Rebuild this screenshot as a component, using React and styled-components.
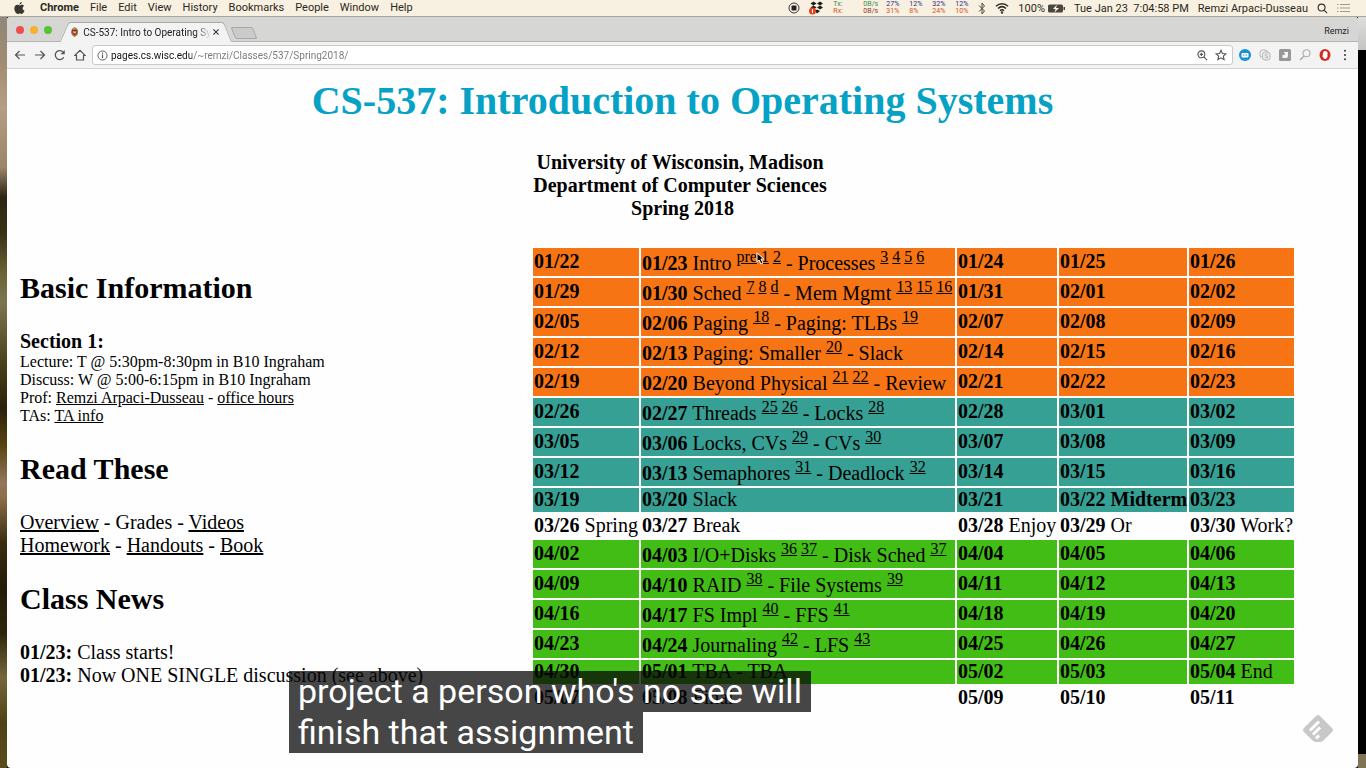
import React from "react";
import styled, { createGlobalStyle, css } from "styled-components";

const GlobalStyle = createGlobalStyle`
  * { box-sizing: border-box; }
  body { margin: 0; background: #000; }
  button { border: 0; padding: 0; margin: 0; background: none; font: inherit; color: inherit; }
`;

const uiFont = css`
  font-family: Roboto, "Liberation Sans", sans-serif;
  font-size: ${(p) => (p.$small ? 10 : 11)}px;
`;

const Desktop = styled.div`
  position: relative;
  display: flex;
  flex-direction: column;
  min-height: 100vh;
`;

/* ---------- macOS menu bar ---------- */

const MenuBar = styled.header`
  ${uiFont}
  display: flex;
  align-items: center;
  justify-content: space-between;
  height: 17px;
  padding: 0 16px 0 14px;
  background: #f8f0e0;
  border-bottom: 1px solid #a9a49a;
  color: #2b2822;
  white-space: nowrap;
`;

const MenuGroup = styled.nav`
  display: flex;
  align-items: center;
  gap: 11px;
`;

const MenuItem = styled.button`
  font-weight: ${(p) => (p.$strong ? 700 : 400)};
  line-height: 16px;
`;

const AppleSlot = styled.span`
  display: flex;
  margin-right: 4px;
`;

const StatusGroup = styled.div`
  display: flex;
  align-items: center;
  gap: 9px;
`;

const Meter = styled.div`
  width: ${(p) => p.$width}px;
  font-size: 7px;
  line-height: 7px;
  color: ${(p) => p.$top};
`;

const MeterLow = styled.div`
  color: ${(p) => p.$color || "#d0502c"};
`;

const Meters = styled.div`
  display: flex;
  gap: 9px;
`;

const Battery = styled.div`
  display: flex;
  align-items: center;
  gap: 3px;
`;

/* ---------- browser window ---------- */

const Stage = styled.div`
  flex: 1;
  display: grid;
  grid-template-columns: 7px minmax(0, 1fr) 8px;
`;

const WallpaperLeft = styled.div`
  background: linear-gradient(
    #8f8878 0%, #a08c70 6%, #b59e84 12%, #9c8468 20%, #2c2413 24%, #3a3214 29%,
    #6a6234 34%, #7c7650 38%, #4a401c 46%, #2a210c 52%, #57430f 57%, #92765a 62%,
    #8c6e48 64%, #3a2d0e 70%, #241c08 76%, #2e260c 82%, #75663c 88%, #4e4214 94%, #5c4c1c 100%
  );
`;

const WallpaperRight = styled.div`
  background: linear-gradient(
    #dededc 0, #c4c4c2 33px, #000 33px, #000 calc(100% - 14px), #7f7555 calc(100% - 14px)
  );
`;

const Window = styled.div`
  display: flex;
  flex-direction: column;
  background: #fefefe;
  border-radius: 3px 3px 4px 4px;
  overflow: hidden;
`;

const TabStrip = styled.div`
  ${uiFont}
  display: flex;
  align-items: flex-end;
  height: 25px;
  padding-right: 9px;
  background: #d6d6d4;
  border-bottom: 1px solid #b4b4b4;
  color: #222;
`;

const Lights = styled.div`
  display: flex;
  gap: 6px;
  padding: 0 12px 7px 9px;
`;

const Light = styled.button`
  width: 8px;
  height: 8px;
  border-radius: 50%;
  background: ${(p) => p.$color};
`;

const Tab = styled.div`
  position: relative;
  z-index: 0;
  display: flex;
  align-items: center;
  gap: 5px;
  width: 164px;
  height: 20px;
  margin: 0 5px -1px 0;
  padding-left: 7px;

  &::before,
  &::after {
    content: "";
    position: absolute;
    z-index: -1;
    top: 0;
    bottom: 0;
    background: #f3f3f3;
    border-top: 1px solid #a8a8a8;
  }
  &::before {
    left: 0;
    width: 60%;
    border-left: 1px solid #a8a8a8;
    border-radius: 3px 0 0 0;
    transform: skewX(-24deg);
  }
  &::after {
    right: 0;
    width: 60%;
    border-right: 1px solid #a8a8a8;
    border-radius: 0 3px 0 0;
    transform: skewX(22deg);
  }
`;

const TabTitle = styled.span`
  flex: 1;
  margin-right: -3px;
  font-size: 10px;
  white-space: nowrap;
  mask-image: linear-gradient(90deg, #000 88%, transparent 100%);
`;

const TabClose = styled.button`
  display: flex;
  margin-right: 9px;
`;

const NewTab = styled.button`
  width: 22px;
  height: 12px;
  margin-bottom: 2px;
  border: 1px solid #a8a8a8;
  border-radius: 2px;
  background: #cbcbc9;
  transform: skewX(22deg);
`;

const Profile = styled.span`
  margin-left: auto;
  padding-bottom: 5px;
  font-size: 9px;
`;

const Toolbar = styled.div`
  display: flex;
  align-items: center;
  gap: 8px;
  height: 27px;
  padding: 0 7px;
  background: #f3f3f3;
  border-bottom: 1px solid #d4d4d4;
`;

const ToolButton = styled.button`
  display: flex;
  align-items: center;
  justify-content: center;
  flex: none;
  width: 12px;
  height: 16px;
`;

const AddressBar = styled.label`
  flex: 1;
  display: flex;
  align-items: center;
  gap: 3px;
  height: 20px;
  margin: 0 -2px;
  padding: 0 5px 0 4px;
  border: 1px solid #cacaca;
  border-radius: 3px;
  background: #fff;
`;

const AddressActions = styled.span`
  display: flex;
  gap: 7px;
`;

const AddressInput = styled.input`
  ${uiFont}
  flex: 1;
  min-width: 0;
  border: 0;
  padding: 0;
  outline: 0;
  color: #333;
  background: linear-gradient(90deg, #111 81px, #777 81px) text;
  -webkit-text-fill-color: transparent;
`;

/* ---------- course page ---------- */

const Page = styled.main`
  position: relative;
  flex: 1;
  padding: 9px 64px 54px 13px;
  font-family: "Liberation Serif", "Times New Roman", serif;
  font-size: 20px;
  line-height: 23px;
  color: #000;
`;

const Masthead = styled.div`
  margin-right: -51px;
  text-align: center;
`;

const Title = styled.h1`
  margin: 0 0 27px;
  font-size: 40px;
  line-height: 46px;
  color: #06a2c5;
`;

const School = styled.p`
  margin: 0 0 26px;
  font-weight: 700;
`;

const Columns = styled.div`
  display: flex;
  align-items: center;
  justify-content: space-between;
`;

const Sidebar = styled.div`
  white-space: nowrap;
  flex: 1;
  min-width: 0;
`;

const Heading = styled.h2`
  margin: ${(p) => (p.$first ? "0 0 24px" : "25px 0")};
  font-size: 30px;
  line-height: 34px;
`;

const SectionName = styled.h3`
  margin: 0;
  font-size: 20px;
  line-height: 24px;
`;

const Details = styled.p`
  margin: 0 0 27px;
  font-size: 16px;
  line-height: 18px;
`;

const Lines = styled.p`
  margin: 0;
`;

const Link = styled.a`
  color: inherit;
  text-decoration: underline;
`;

const Schedule = styled.table`
  flex: none;
  width: 765px;
  margin-right: -2px;
  table-layout: fixed;
  border-collapse: separate;
  border-spacing: 2px;
  line-height: 22px;
  white-space: nowrap;
`;

const Day = styled.td`
  height: ${(p) => (p.$tall ? 28 : 24)}px;
  padding: 0 1px 2px;
  vertical-align: middle;
  background: ${(p) => p.$color};
`;

const Chapters = styled.sup`
  position: relative;
  font-size: 16px;
  line-height: 18px;
`;

const Pointer = styled.svg`
  position: absolute;
  left: 20px;
  top: 4px;
`;

const FeedlyBadge = styled.button`
  position: absolute;
  right: 25px;
  bottom: 26px;
  display: flex;
`;

const Caption = styled.div`
  position: absolute;
  left: 289px;
  bottom: 15px;
  display: flex;
  flex-direction: column;
  align-items: flex-start;
  font-family: Roboto, "Liberation Sans", sans-serif;
  font-size: 34px;
  line-height: 41px;
  color: #fff;
  white-space: nowrap;
`;

const CaptionLine = styled.span`
  padding: 0 9px;
  background: rgba(8, 8, 8, 0.75);
`;

/* ---------- icons ---------- */

const Svg = ({ w = 12, h = w, box = "0 0 24 24", stroke = "#555", sw = 2, children, ...rest }) => (
  <svg width={w} height={h} viewBox={box} fill="none" stroke={stroke} strokeWidth={sw} aria-hidden="true" {...rest}>
    {children}
  </svg>
);

const AppleIcon = () => (
  <Svg w={11} h={12} box="0 0 22 24" stroke="none">
    <path fill="#3a3730" d="M15.500 0c.2 2.600-2 5.200-4.600 5.100C10.700 2.600 13 .2 15.500 0zM20 8.200c-4 2.600-3.200 7.900.9 9.500-1 2.900-3 6-5.100 6.100-1.700 0-2.200-1-4.200-1s-2.700 1-4.200 1C4 23.800.5 17.500.7 12.600.9 8 4 5.700 6.800 5.700c1.900 0 3.200 1.100 4.600 1.100 1.300 0 2.700-1.300 5-1.200 1.500.1 2.800.8 3.600 2.600z" />
  </Svg>
);

const RecordIcon = () => (
  <Svg stroke="#333">
    <circle cx="12" cy="12" r="10" />
    <rect x="7" y="7" width="10" height="10" rx="2" fill="#222" stroke="none" />
  </Svg>
);

const DropboxIcon = () => (
  <Svg w={15} h={14} box="0 0 30 28" stroke="none">
    <path fill="#1d1d1d" d="M9 1l6 4-6 4-6-4zM22 1l6 4-6 4-6-4zM9 9l6 4-6 4-6-4zM22 9l6 4-6 4-6-4zM16 17l6 3-6 5-4-5z" />
    <circle cx="7" cy="20" r="7" fill="#e2401f" />
    <path d="M7 16v8" stroke="#fff" strokeWidth="2" />
  </Svg>
);

const BluetoothIcon = () => (
  <Svg w={8} h={13} box="0 0 16 26" stroke="#4a463f">
    <path d="M2 7l11 11-5 6V2l5 6L2 19" />
  </Svg>
);

const WifiIcon = () => (
  <Svg w={14} h={12} box="0 0 28 24" stroke="#2f2c27" sw={3}>
    <path d="M2 8.500c7-7 17-7 24 0M6 13c5-5 11-5 16 0M10 17.500c2.500-2.500 5.500-2.500 8 0" />
    <circle cx="14" cy="21" r="1" />
  </Svg>
);

const BatteryIcon = () => (
  <Svg w={17} h={9} box="0 0 34 18" stroke="none">
    <rect x="0" y="1" width="30" height="16" rx="3" fill="#4a463e" />
    <rect x="31" y="6" width="3" height="6" fill="#4a463e" />
    <path d="M18 1l-8 9h5l-2 7 9-9h-6z" fill="#f8f0e0" />
  </Svg>
);

const SearchIcon = () => (
  <Svg w={11} stroke="#33302a" sw={2.500}>
    <circle cx="10" cy="10" r="7.500" />
    <path d="M15.500 15.500L22 22" />
  </Svg>
);

const ListIcon = () => (
  <Svg w={13} h={10} box="0 0 26 20" stroke="#a39c90" sw={2}>
    <path d="M0 3h3M6 3h20M0 10h3M6 10h20M0 17h3M6 17h20" />
  </Svg>
);

const CrestIcon = () => (
  <Svg w={9} h={12} box="0 0 18 24" stroke="#5c3a1c" sw={1.500}>
    <path d="M9 1l6 4 2 8-3 7-5 3-5-3-3-7 2-8z" fill="#d6a032" />
    <path d="M4 7h10v8l-5 5-5-5z" fill="#b0182a" />
    <path d="M6 10l1.500 5L9 11l1.500 4L12 10" stroke="#fff" strokeWidth="1.500" />
  </Svg>
);

const CloseIcon = () => (
  <Svg w={6} box="0 0 14 14" stroke="#333" sw={2.400}><path d="M1 1l12 12M13 1L1 13" /></Svg>
);

const BackIcon = () => (
  <Svg sw={2.400}><path d="M22 12H3M11 4l-8 8 8 8" /></Svg>
);

const ForwardIcon = () => (
  <Svg sw={2.400}><path d="M2 12h19M13 4l8 8-8 8" /></Svg>
);

const ReloadIcon = () => (
  <Svg sw={2.600}>
    <path d="M19.500 16.500A9 9 0 1 1 19 7" />
    <path d="M21.500 2v8.500H13z" fill="#555" stroke="none" />
  </Svg>
);

const HomeIcon = () => (
  <Svg sw={2.400}><path d="M1.500 13L12 2.500 22.500 13H19v9H5v-9z" /></Svg>
);

const InfoIcon = () => (
  <Svg w={11} sw={2}><circle cx="12" cy="12" r="10" /><path d="M12 10v8M12 5.500v2.500" strokeWidth="2.500" /></Svg>
);

const ZoomIcon = () => (
  <Svg w={11} sw={2.400}><circle cx="9.500" cy="9.500" r="7.500" /><path d="M15 15l7 7M6 9.500h7M9.500 6v7" /></Svg>
);

const StarIcon = () => (
  <Svg w={12} sw={2.200}><path d="M12 2.500l2.900 6.500 7 .7-5.300 4.700 1.600 7L12 17.700l-6.200 3.700 1.600-7L2.100 9.700l7-.7z" /></Svg>
);

const BlueIcon = () => (
  <Svg stroke="none">
    <circle cx="12" cy="12" r="12" fill="#1690d6" />
    <rect x="5" y="8" width="14" height="9" rx="2" fill="#fff" />
    <path d="M8 12h2M11 12h2M14 12h2" stroke="#1690d6" strokeWidth="2" />
  </Svg>
);

const SkypeIcon = () => (
  <Svg stroke="#b4b4b4" sw={2}>
    <rect x="2" y="2" width="15" height="15" rx="5" />
    <rect x="7" y="6" width="15" height="16" rx="5" fill="#ececec" />
    <path d="M17.500 11c-2-2-6-1-5 1.500s5 1 5 3.500-4 2.500-6 .5" />
  </Svg>
);

const GreyBoxIcon = () => (
  <Svg stroke="none">
    <rect width="24" height="24" rx="3" fill="#989898" />
    <path d="M10 6h8v8q0 4-4 4H7v-6l3-1z" fill="#f6f6f6" />
    <circle cx="10" cy="10" r="2" fill="#989898" />
  </Svg>
);

const LensIcon = () => (
  <Svg stroke="#b0b0b0" sw={2.400}><circle cx="15" cy="8.500" r="7" /><path d="M10 14l-8 8" strokeWidth="3.500" /></Svg>
);

const HandIcon = () => (
  <Svg stroke="none">
    <ellipse cx="12" cy="12" rx="11" ry="12" fill="#d8261c" />
    <path d="M8 8l2-4h4l3 3v8l-3 5h-3l-4-5z" fill="#fff" />
  </Svg>
);

const DotsIcon = () => (
  <Svg stroke="none">
    <g fill="#444"><circle cx="12" cy="3.500" r="2.200" /><circle cx="12" cy="12" r="2.200" /><circle cx="12" cy="20.500" r="2.200" /></g>
  </Svg>
);

const FeedlyIcon = () => (
  <Svg w={30} h={27} box="0 0 30 27" stroke="#fff" sw={3}>
    <path d="M13 1q2-2 4 0l12 12q2 2 0 4l-8 8q-2 2-4 2h-4q-2 0-4-2l-8-8q-2-2 0-4z" fill="#c8c8c8" stroke="none" />
    <path d="M8 14.500l7-7M11 18.500l5-5M14 22.500l1-1" strokeLinecap="square" />
  </Svg>
);

/* ---------- data ---------- */

const MENUS = ["File", "Edit", "View", "History", "Bookmarks", "People", "Window", "Help"];
const LOADS = [["27%", "31%"], ["12%", "8%"], ["32%", "24%"], ["12%", "10%"]];

const ORANGE = "#f67414";
const TEAL = "#36a094";
const GREEN = "#42bd16";

const ch = (...refs) => ({ refs });

const WEEKS = [
  [ORANGE, "01/22", ["01/23", "Intro", ch("pre", "1", "2"), "- Processes", ch("3", "4", "5", "6")], "01/24", "01/25", "01/26"],
  [ORANGE, "01/29", ["01/30", "Sched", ch("7", "8", "d"), "- Mem Mgmt", ch("13", "15", "16")], "01/31", "02/01", "02/02"],
  [ORANGE, "02/05", ["02/06", "Paging", ch("18"), "- Paging: TLBs", ch("19")], "02/07", "02/08", "02/09"],
  [ORANGE, "02/12", ["02/13", "Paging: Smaller", ch("20"), "- Slack"], "02/14", "02/15", "02/16"],
  [ORANGE, "02/19", ["02/20", "Beyond Physical", ch("21", "22"), "- Review"], "02/21", "02/22", "02/23"],
  [TEAL, "02/26", ["02/27", "Threads", ch("25", "26"), "- Locks", ch("28")], "02/28", "03/01", "03/02"],
  [TEAL, "03/05", ["03/06", "Locks, CVs", ch("29"), "- CVs", ch("30")], "03/07", "03/08", "03/09"],
  [TEAL, "03/12", ["03/13", "Semaphores", ch("31"), "- Deadlock", ch("32")], "03/14", "03/15", "03/16"],
  [TEAL, "03/19", ["03/20", "Slack"], "03/21", "03/22 Midterm", "03/23"],
  ["transparent", ["03/26", "Spring"], ["03/27", "Break"], ["03/28", "Enjoy"], ["03/29", "Or"], ["03/30", "Work?"]],
  [GREEN, "04/02", ["04/03", "I/O+Disks", ch("36", "37"), "- Disk Sched", ch("37")], "04/04", "04/05", "04/06"],
  [GREEN, "04/09", ["04/10", "RAID", ch("38"), "- File Systems", ch("39")], "04/11", "04/12", "04/13"],
  [GREEN, "04/16", ["04/17", "FS Impl", ch("40"), "- FFS", ch("41")], "04/18", "04/19", "04/20"],
  [GREEN, "04/23", ["04/24", "Journaling", ch("42"), "- LFS", ch("43")], "04/25", "04/26", "04/27"],
  [GREEN, "04/30", ["05/01", "TBA - TBA"], "05/02", "05/03", ["05/04", "End"]],
  ["transparent", "05/07", ["05/08", "Final"], "05/09", "05/10", "05/11"],
];

const COLUMN_WIDTHS = [106, 314, 100, 128, 105];

function Refs({ refs }) {
  return (
    <Chapters>
      {refs.map((r, i) => (
        <React.Fragment key={i}>
          {i > 0 && " "}
          <Link href="#">{r}</Link>
        </React.Fragment>
      ))}
      {refs[0] === "pre" && (
        <Pointer width="9" height="13" viewBox="0 0 9 13" aria-hidden="true">
          <path d="M1 1v9l2-2 2 4 2-1-2-4h3z" fill="#000" stroke="#fff" strokeWidth="1" />
        </Pointer>
      )}
    </Chapters>
  );
}

function DayContent({ value }) {
  const [date, ...parts] = [].concat(value);
  return (
    <>
      <b>{date}</b>
      {parts.map((part, i) => (
        <React.Fragment key={i}> {part.refs ? <Refs refs={part.refs} /> : part}</React.Fragment>
      ))}
    </>
  );
}

export default function App() {
  return (
    <Desktop>
      <GlobalStyle />
      <MenuBar>
        <MenuGroup>
          <AppleSlot><AppleIcon /></AppleSlot>
          <MenuItem $strong>Chrome</MenuItem>
          {MENUS.map((m) => <MenuItem key={m}>{m}</MenuItem>)}
        </MenuGroup>
        <StatusGroup>
          <RecordIcon />
          <DropboxIcon />
          <Meters>
            <Meter $width={21} $top="#3d8a4c">Tx:<MeterLow>Rx:</MeterLow></Meter>
            <Meter $width={14} $top="#3d8a4c">0B/s<MeterLow $color="#8e3a30">0B/s</MeterLow></Meter>
            {LOADS.map(([a, b], i) => (
              <Meter key={i} $width={14} $top="#2c2c86">{a}<MeterLow>{b}</MeterLow></Meter>
            ))}
          </Meters>
          <BluetoothIcon />
          <WifiIcon />
          <Battery>100% <BatteryIcon /></Battery>
          <span>Tue Jan 23&nbsp; 7:04:58 PM</span>
          <span>Remzi Arpaci-Dusseau</span>
          <SearchIcon />
          <ListIcon />
        </StatusGroup>
      </MenuBar>

      <Stage>
        <WallpaperLeft />
        <Window>
          <TabStrip>
            <Lights>
              <Light $color="#ee4f4a" aria-label="Close window" />
              <Light $color="#f5b02f" aria-label="Minimise" />
              <Light $color="#55c42f" aria-label="Full screen" />
            </Lights>
            <Tab>
              <CrestIcon />
              <TabTitle>CS-537: Intro to Operating Sy</TabTitle>
              <TabClose aria-label="Close tab"><CloseIcon /></TabClose>
            </Tab>
            <NewTab aria-label="New tab" />
            <Profile>Remzi</Profile>
          </TabStrip>

          <Toolbar>
            <ToolButton aria-label="Back"><BackIcon /></ToolButton>
            <ToolButton aria-label="Forward"><ForwardIcon /></ToolButton>
            <ToolButton aria-label="Reload"><ReloadIcon /></ToolButton>
            <ToolButton aria-label="Home"><HomeIcon /></ToolButton>
            <AddressBar>
              <InfoIcon />
              <AddressInput $small aria-label="Address" defaultValue="pages.cs.wisc.edu/~remzi/Classes/537/Spring2018/" />
              <AddressActions>
                <ToolButton aria-label="Zoom"><ZoomIcon /></ToolButton>
                <ToolButton aria-label="Bookmark"><StarIcon /></ToolButton>
              </AddressActions>
            </AddressBar>
            <ToolButton aria-label="Messages"><BlueIcon /></ToolButton>
            <ToolButton aria-label="Skype"><SkypeIcon /></ToolButton>
            <ToolButton aria-label="Reader"><GreyBoxIcon /></ToolButton>
            <ToolButton aria-label="Lens"><LensIcon /></ToolButton>
            <ToolButton aria-label="Blocker"><HandIcon /></ToolButton>
            <ToolButton aria-label="More"><DotsIcon /></ToolButton>
          </Toolbar>

          <Page>
            <Masthead>
              <Title>CS-537: Introduction to Operating Systems</Title>
              <School>
                University of Wisconsin, Madison&nbsp;<br />
                Department of Computer Sciences&nbsp;<br />
                Spring 2018
              </School>
            </Masthead>
            <Columns>
              <Sidebar>
                <Heading $first>Basic Information</Heading>
                <SectionName>Section 1:</SectionName>
                <Details>
                  Lecture: T @ 5:30pm-8:30pm in B10 Ingraham<br />
                  Discuss: W @ 5:00-6:15pm in B10 Ingraham<br />
                  Prof: <Link href="#">Remzi Arpaci-Dusseau</Link> - <Link href="#">office hours</Link><br />
                  TAs: <Link href="#">TA info</Link>
                </Details>
                <Heading>Read These</Heading>
                <Lines>
                  <Link href="#">Overview</Link> - Grades - <Link href="#">Videos</Link><br />
                  <Link href="#">Homework</Link> - <Link href="#">Handouts</Link> - <Link href="#">Book</Link>
                </Lines>
                <Heading>Class News</Heading>
                <Lines>
                  <b>01/23:</b> Class starts!<br />
                  <b>01/23:</b> Now ONE SINGLE discussion (see above)
                </Lines>
              </Sidebar>
              <Schedule>
                <colgroup>
                  {COLUMN_WIDTHS.map((w, i) => <col key={i} width={w} />)}
                </colgroup>
                <tbody>
                  {WEEKS.map(([color, ...days], i) => {
                    const tall = days[1].some((part) => part.refs);
                    return (
                      <tr key={i}>
                        {days.map((d, j) => (
                          <Day key={j} $color={color} $tall={tall}><DayContent value={d} /></Day>
                        ))}
                      </tr>
                    );
                  })}
                </tbody>
              </Schedule>
            </Columns>
            <FeedlyBadge aria-label="Follow in feedly"><FeedlyIcon /></FeedlyBadge>
          </Page>
        </Window>
        <WallpaperRight />
      </Stage>

      <Caption>
        <CaptionLine>project a person who's no see will</CaptionLine>
        <CaptionLine>finish that assignment</CaptionLine>
      </Caption>
    </Desktop>
  );
}
